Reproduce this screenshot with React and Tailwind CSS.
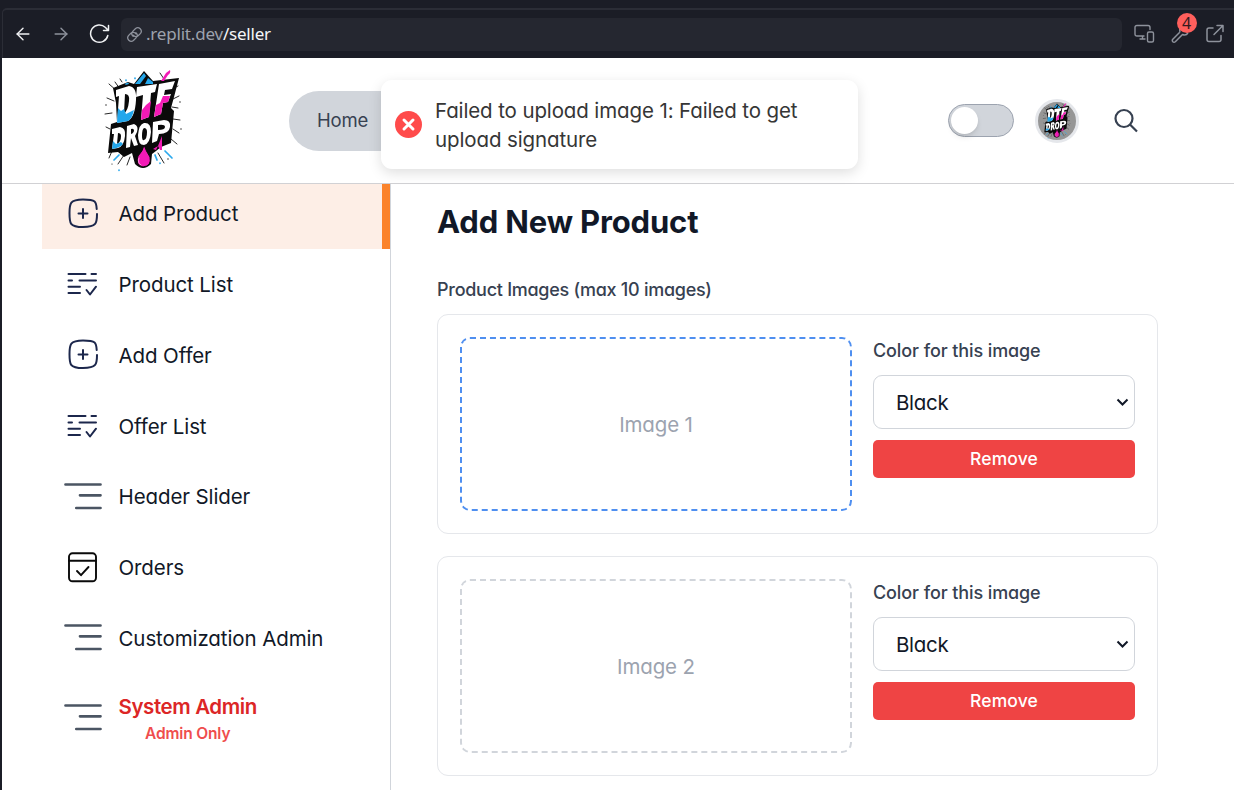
import { ArrowLeft, ArrowRight } from "lucide-react";

const base = "font-['Inter','Lato',sans-serif] [font-feature-settings:'cv11','ss03']";

function Logo({ className }) {
  return (
    <svg className={className} viewBox="0 0 84 108" fill="none">
      <g stroke="#111" strokeWidth=".9" strokeLinecap="round">
        <path d="M15 24L7 17M12 34L5 31M18 22L13 15M10 46L3 47M70 22L76 19M71 32L77 29M70 40L76 41M71 62L77 66M69 72L75 77M10 84L7 91M22 88L16 97M28 90L25 98M56 86L62 96M8 62L4 60M62 12L58 6M71 52L78 53M20 15L18 12" />
      </g>
      <g fill="#111">
        <circle cx="4" cy="38" r=".7" /><circle cx="78" cy="35" r=".7" /><circle cx="79" cy="62" r=".7" /><circle cx="10" cy="97" r=".6" /><circle cx="66" cy="92" r=".7" />
      </g>
      <path d="M14 36L11 21L26 15L32 17L42 4L51 14L77 11L72 30L69 41L72 44L69 76L59 80L54 84L50 87L49 97Q41 105 33 97L30 86L22 90L16 85L6 86L9 57L15 55Z" fill="#0a0a0a" />
      <path d="M33 17L42 6L44 9L38 17ZM43 17L46 11L51 15L51 17Z" fill="#23a7ec" />
      <g stroke="#2ba9ed" strokeWidth="1.700" strokeLinecap="round">
        <path d="M17 88L12 93M63 84L70 91M53 88L55 93M24 13L24 13.500M33 11L33 11.500M24 17L26 16.500M17 103L17 103.300M58 96L58 96.300" />
      </g>
      <path d="M59 14L64 6L68 3Q69 6 66 8L62 14Z" fill="#f31ab6" />
      <path d="M51 82L56 79L54 83ZM56 79L60 69L60 83L58 83Z" fill="#f31ab6" />
      <path fillRule="evenodd" d="M14 23L27 19Q35 20 34 33Q33 50 26 54L15 56L17 29L14 30ZM23 27L22 46Q26 44 27 34Q28 27 23 27Z" fill="#fff" />
      <path d="M35 20L55 17L53 25L49 26L47 50L39 53L41 28L34 30Z" fill="#fff" />
      <path d="M57 17L73 14L70 22L63 23L62 28L69 27L66 35L61 36L59 47L52 50Z" fill="#fff" />
      <path d="M16 41L19 44L22 42L24 47L28 45L32 43Q30 52 26 54L15 56Z" fill="#23a7ec" />
      <path d="M40 43L44 38L49 34L47 50L39 53ZM54 38L58 36L61 29L68 29L66 35L61 36L59 47L52 50Z" fill="#f31ab6" />
      <g fill="#fff" fillRule="evenodd">
        <path d="M10 62L18 60Q24 61 23 69Q22 79 16 81L10 82L12 67L10 67ZM16 66L15 77Q19 75 19 69Q19 66 16 66Z" />
        <path d="M25 59L32 57Q37 59 35 65L33 69L36 78L32 79L29 71L28 80L24 81ZM29 62L29 67Q32 66 32 63Q31 61 29 62Z" />
        <path d="M42 56Q49 55 49 65Q48 77 42 78Q36 78 36 68Q37 57 42 56ZM42 61Q40 62 40 69Q40 74 42 73Q45 72 45 65Q45 61 42 61Z" />
        <path d="M51 55L62 53Q69 53 68 60Q67 67 57 67L55 74L50 76ZM56 58L56 63Q63 63 63 60Q63 57 56 58Z" />
      </g>
      <path d="M11 74L14 77L19 75L21 77Q18 81 10 82Z" fill="#23a7ec" />
      <path d="M42 78Q41 84 36 89Q33 98 41 100Q50 99 48 90Q44 84 42 78Z" fill="#f31ab6" stroke="#0a0a0a" strokeWidth="1" />
      <path d="M37 91Q35 96 39 98" stroke="#ff8ddb" strokeWidth="1" strokeLinecap="round" />
    </svg>
  );
}

function AddIcon() {
  return (
    <svg className="h-[32px] w-[32px]" viewBox="0 0 32 32" fill="none" stroke="#1c274c" strokeWidth="2" strokeLinecap="round">
      <path d="M30 16C30 25 29.500 29 16 29S2.500 25 2.500 15.200S3 1.500 16 1.500S29.300 3.500 29.700 11M16 11V20M11.500 15.500H20.500" />
    </svg>
  );
}

function ListIcon() {
  return (
    <svg className="h-[32px] w-[32px]" viewBox="0 0 32 32" fill="none" stroke="#1c274c" strokeWidth="2" strokeLinecap="round" strokeLinejoin="round">
      <path d="M1.500 6H18.500M24.500 6H29M1.500 12.500H5M12.500 12.500H29M1.500 18.700H13M1.500 25H13M19.500 22L23 26.500L29 18.700" />
    </svg>
  );
}

function MenuIcon() {
  return (
    <svg className="h-[32px] w-[38px]" viewBox="0 0 38 32" fill="none" stroke="#4b5563" strokeWidth="2.700" strokeLinecap="round">
      <path d="M1.500 3.500H36.500M16 14.300H36.500M12.300 27H36.500" />
    </svg>
  );
}

function OrdersIcon() {
  return (
    <svg className="h-[32px] w-[32px]" viewBox="0 0 32 32" fill="none" stroke="#0a0a0a" strokeWidth="1.900" strokeLinecap="round" strokeLinejoin="round">
      <rect x="2" y="1.300" width="27" height="28" rx="3.500" />
      <path d="M2 8.800H29M10 19L14 23.200L21.500 15" />
    </svg>
  );
}

function Item({ icon, children }) {
  return (
    <li className="flex h-[70.800px] items-center">
      <span className="flex w-[77px] shrink-0 justify-center pl-[4px]">{icon}</span>
      <span className="-ml-[0.500px] whitespace-nowrap pt-[2px] text-[20.500px] tracking-[-0.1px] text-[#111827]">{children}</span>
    </li>
  );
}

function ImageCard({ label, active, className = "" }) {
  return (
    <section className={`flex h-[220px] w-[721px] shrink-0 rounded-[11px] border border-[#e5e7eb] p-[22px] ${className}`}>
      <div className={`flex h-[174px] w-[392px] items-center justify-center rounded-[10px] border-2 border-dashed pt-[2px] text-[20.500px] tracking-[-0.15px] text-[#9ca3af] ${active ? "border-[#4f8ff0]" : "border-[#d1d5db]"}`}>
        {label}
      </div>
      <div className="ml-[21px] w-[262px]">
        <div className="h-[38px] whitespace-nowrap pt-px text-[18px] font-medium leading-[26px] tracking-[-0.1px] text-[#374151]">Color for this image</div>
        <div className="flex h-[54px] items-center justify-between rounded-[9px] border border-[#d1d5db] pl-[22px] pr-[5px]">
          <span className="pt-[2px] text-[20.500px] tracking-[-0.3px] text-[#111827]">Black</span>
          <svg className="h-[8px] w-[13px]" viewBox="0 0 13 8" fill="none" stroke="#111827" strokeWidth="2">
            <path d="M1.500 1.500L6.500 6.500L11.500 1.500" />
          </svg>
        </div>
        <button className="mt-[11px] flex h-[38px] w-full items-center justify-center rounded-[5px] bg-[#ef4444] text-[17.500px] font-medium tracking-[0.1px] text-white">Remove</button>
      </div>
    </section>
  );
}

function BrowserBar() {
  return (
    <div className="h-[58px] bg-[#1b1d26] pt-[8px]">
      <div className="ml-[2px] flex h-[50px] items-center rounded-tl-[5px] border-l border-t-2 border-[#2b2d36]">
        <ArrowLeft className="ml-[10px] h-[20px] w-[20px] text-[#f0f1f3]" strokeWidth={1.700} />
        <ArrowRight className="ml-[18px] h-[20px] w-[20px] text-[#8e929c]" strokeWidth={1.700} />
        <svg className="ml-[18px] h-[22px] w-[22px]" viewBox="0 0 22 22" fill="none" stroke="#f0f1f3" strokeWidth="1.500" strokeLinecap="round" strokeLinejoin="round">
          <path d="M19.500 2.500V7.500H14.500M19.300 7.500L16.500 4.500A8.700 8.700 0 1 0 18.800 12.500" />
        </svg>
        <div className="ml-[10px] flex h-[33px] w-[1001px] items-center rounded-[6px] bg-[#252730] pl-[5px] font-['Noto_Sans','Open_Sans',sans-serif] text-[17px] tracking-[-0.2px] text-[#9da2ad]">
          <svg className="h-[17px] w-[17px]" viewBox="0 0 24 24" fill="none" stroke="#8e929c" strokeWidth="1.800" strokeLinecap="round">
            <path d="M10 13a5 5 0 0 0 7.500.5l3-3a5 5 0 0 0-7-7l-4 4a5 5 0 0 0 .5 7M14 11a5 5 0 0 0-7.500-.5l-3 3a5 5 0 0 0 7 7l4-4a5 5 0 0 0-.5-7" />
          </svg>
          <span className="ml-[3px]">.replit.dev</span>
          <span className="text-[#f5f6f8]">/seller</span>
        </div>
        <svg className="ml-[12px] h-[20px] w-[21px]" viewBox="0 0 21 20" fill="none" stroke="#8e929c" strokeWidth="1.400" strokeLinecap="round" strokeLinejoin="round">
          <path d="M10 12H3Q1 12 1 10V3.500Q1 1.500 3 1.500H14Q16 1.500 16 3.500V5.500M8.500 12V15M6 15H11" />
          <rect x="13.500" y="8" width="6" height="10" rx="1.500" />
        </svg>
        <div className="relative ml-[16px] h-[20px] w-[20px]">
          <svg className="h-[20px] w-[20px]" viewBox="0 0 20 20" fill="none" stroke="#8e929c" strokeWidth="1.500" strokeLinejoin="round">
            <path d="M9 8L1.800 15.200Q.8 16.500 1.800 17.700Q3 18.800 4.300 17.700L11.500 10.500Q15 12 17 9M9 8Q8 4 11 2" />
          </svg>
          <span className="absolute left-[5.500px] top-[-11px] flex h-[20px] w-[20px] items-center justify-center rounded-full bg-[#ff5f5c] font-['Noto_Sans',sans-serif] text-[16px] text-[#351b20]">4</span>
        </div>
        <svg className="ml-[14px] h-[20px] w-[20px]" viewBox="0 0 20 20" fill="none" stroke="#8e929c" strokeWidth="1.500" strokeLinecap="round" strokeLinejoin="round">
          <path d="M8 4H4Q2 4 2 6V15.500Q2 17.500 4 17.500H14Q16 17.500 16 15.500V11.500M12 1.500H18V7.500M18 1.500L9 10.500" />
        </svg>
      </div>
    </div>
  );
}

export default function App() {
  return (
    <div className={`relative flex h-[790px] w-[1234px] flex-col overflow-hidden bg-white ${base}`}>
      <BrowserBar />
      <div className="flex min-h-0 flex-1 flex-col border-l-2 border-[#1b1d26]">
        <header className="flex h-[126px] shrink-0 items-center border-b border-[#d1d1d4]">
          <Logo className="ml-[100px] h-[108px] w-[84px] shrink-0" />
          <nav className="ml-[103px] flex h-[60px] w-[560px] shrink-0 items-center rounded-full bg-[#d1d5db] pl-[28px] pt-px text-[18.500px] tracking-[-0.15px] text-[#374151]">Home</nav>
          <div className="ml-[99px] flex h-[33px] w-[66px] items-center rounded-full border border-[#9ca3af] bg-[#d1d5db] pl-[2px]">
            <span className="h-[27px] w-[27px] rounded-full bg-white shadow-md" />
          </div>
          <div className="ml-[21px] flex h-[44px] w-[44px] items-center justify-center rounded-full border-[3px] border-[#e5e7eb] bg-[#969696]">
            <Logo className="h-[38px] w-[30px]" />
          </div>
          <svg className="ml-[34px] h-[26px] w-[26px]" viewBox="0 0 26 26" fill="none" stroke="#374151" strokeWidth="2.200">
            <circle cx="11" cy="10.500" r="8.500" />
            <path d="M17 16.500L24 23.500" />
          </svg>
        </header>
        <div className="flex min-h-0 flex-1">
          <aside className="w-[389px] shrink-0 border-r border-[#d1d5db] pl-[40px]">
            <ul>
              <li className="flex h-[65px] items-center border-r-8 border-[#fb832b] bg-[#fdeee6] pb-[6px]">
                <span className="flex w-[77px] justify-center pl-[4px]"><AddIcon /></span>
                <span className="-ml-[0.500px] pt-[2px] text-[20.500px] tracking-[-0.1px] text-[#111827]">Add Product</span>
              </li>
              <Item icon={<ListIcon />}>Product List</Item>
              <Item icon={<AddIcon />}>Add Offer</Item>
              <Item icon={<ListIcon />}>Offer List</Item>
              <Item icon={<MenuIcon />}>Header Slider</Item>
              <Item icon={<OrdersIcon />}>Orders</Item>
              <Item icon={<MenuIcon />}>Customization Admin</Item>
              <li className="flex h-[90px] items-center">
                <span className="flex w-[77px] justify-center pb-[2px] pl-[4px]"><MenuIcon /></span>
                <span className="-ml-[0.500px] flex flex-col items-center whitespace-nowrap pt-[2px]">
                  <span className="text-[20.500px] font-semibold leading-[28px] tracking-[-0.4px] text-[#dc2626]">System Admin</span>
                  <span className="text-[15.500px] font-semibold leading-[26px] tracking-[-0.15px] text-[#ef4d4d]">Admin Only</span>
                </span>
              </li>
            </ul>
          </aside>
          <main className="flex min-w-0 flex-1 flex-col pl-[46px] pt-[18px]">
            <h1 className="h-[74px] text-[31px] font-bold leading-[40px] tracking-[-0.15px] text-[#111827]">Add New Product</h1>
            <div className="h-[38px] pt-px text-[18px] font-medium leading-[26px] tracking-[-0.27px] text-[#374151]">Product Images (max 10 images)</div>
            <ImageCard label="Image 1" active />
            <ImageCard label="Image 2" className="mt-[22px]" />
          </main>
        </div>
      </div>
      <div className="absolute left-[381px] top-[80px] flex h-[89px] w-[477px] items-center rounded-[11px] bg-white pl-[14px] shadow-[0_4px_13px_rgba(0,0,0,0.13)]">
        <svg className="h-[27px] w-[27px]" viewBox="0 0 27 27">
          <circle cx="13.500" cy="13.500" r="13.500" fill="#ff4b4b" />
          <path d="M9 9L18 18M18 9L9 18" stroke="#fff" strokeWidth="3" strokeLinecap="round" />
        </svg>
        <p className="ml-[13px] whitespace-nowrap text-[20.500px] leading-[29px] tracking-[-0.12px] text-[#363636]">
          Failed to upload image 1: Failed to get<br />upload signature
        </p>
      </div>
    </div>
  );
}
